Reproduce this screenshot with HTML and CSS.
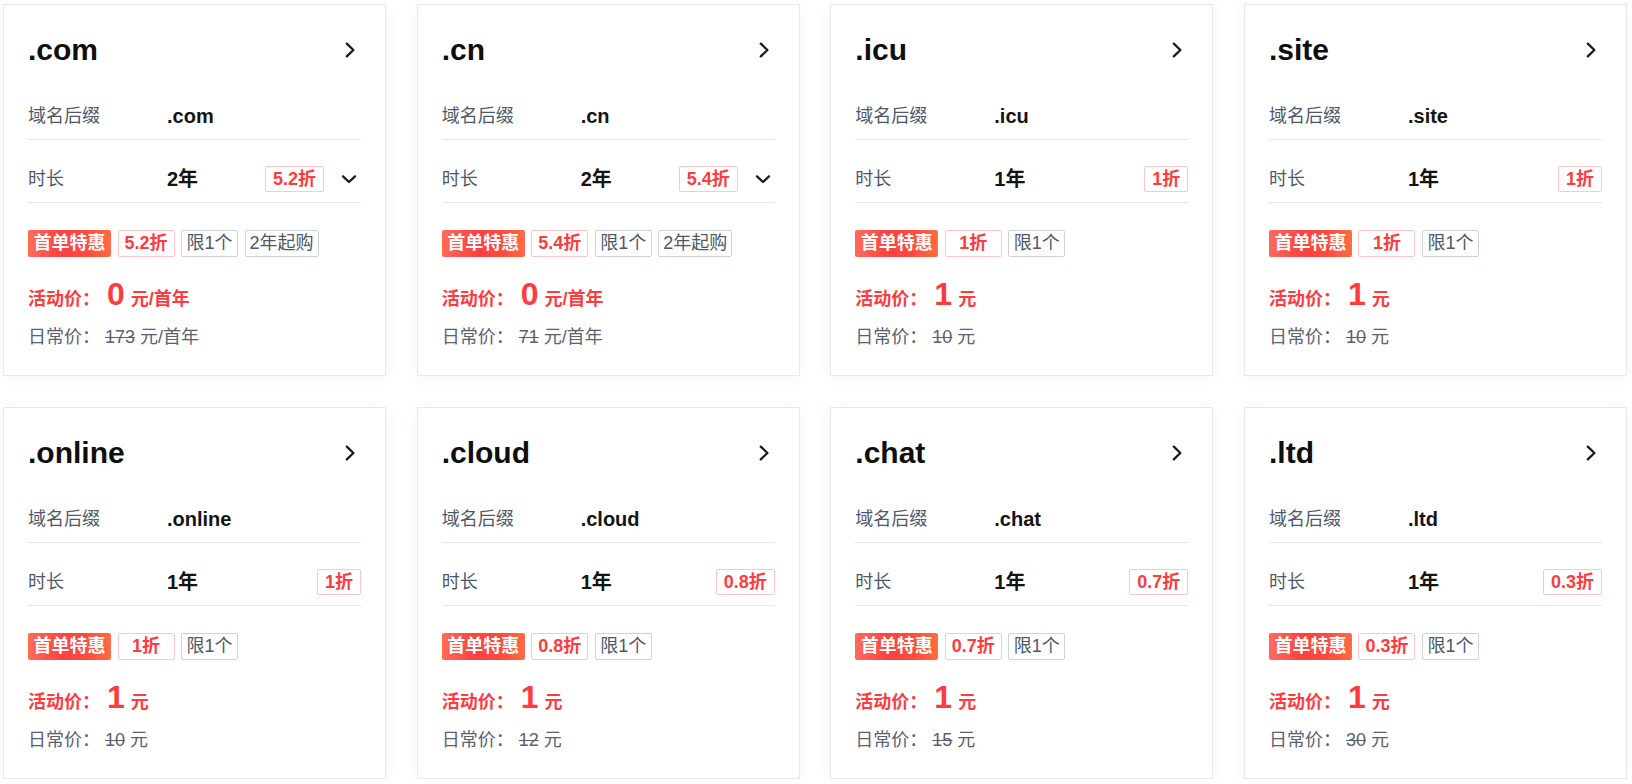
FILE: index.html
```html
<!DOCTYPE html>
<html lang="zh-CN">
<head>
<meta charset="utf-8">
<title>域名优惠</title>
<link rel="stylesheet" href="styles.css">
</head>
<body>
<div class="grid">

  <div class="card">
    <div class="card-head"><span class="title">.com</span>
      <svg class="chev-r" viewBox="0 0 20 20"><path d="M5.8 3.6 L12.4 10 L5.8 16.4"/></svg></div>
    <div class="row"><span class="label">域名后缀</span><span class="value suffix">.com</span></div>
    <div class="row"><span class="label">时长</span><span class="value">2年</span><span class="badge">5.2折</span>
      <svg class="chev-d" viewBox="0 0 20 20"><path d="M4 7.4 L10 13 L16 7.4"/></svg></div>
    <div class="tags"><span class="tag hot">首单特惠</span><span class="tag red">5.2折</span><span class="tag gray">限1个</span><span class="tag gray">2年起购</span></div>
    <div class="price">活动价： <span class="big">0</span> 元/首年</div>
    <div class="regular">日常价： <s>173</s> 元/首年</div>
  </div>

  <div class="card">
    <div class="card-head"><span class="title">.cn</span>
      <svg class="chev-r" viewBox="0 0 20 20"><path d="M5.8 3.6 L12.4 10 L5.8 16.4"/></svg></div>
    <div class="row"><span class="label">域名后缀</span><span class="value suffix">.cn</span></div>
    <div class="row"><span class="label">时长</span><span class="value">2年</span><span class="badge">5.4折</span>
      <svg class="chev-d" viewBox="0 0 20 20"><path d="M4 7.4 L10 13 L16 7.4"/></svg></div>
    <div class="tags"><span class="tag hot">首单特惠</span><span class="tag red">5.4折</span><span class="tag gray">限1个</span><span class="tag gray">2年起购</span></div>
    <div class="price">活动价： <span class="big">0</span> 元/首年</div>
    <div class="regular">日常价： <s>71</s> 元/首年</div>
  </div>

  <div class="card">
    <div class="card-head"><span class="title">.icu</span>
      <svg class="chev-r" viewBox="0 0 20 20"><path d="M5.8 3.6 L12.4 10 L5.8 16.4"/></svg></div>
    <div class="row"><span class="label">域名后缀</span><span class="value suffix">.icu</span></div>
    <div class="row"><span class="label">时长</span><span class="value">1年</span><span class="badge">1折</span></div>
    <div class="tags"><span class="tag hot">首单特惠</span><span class="tag red">1折</span><span class="tag gray">限1个</span></div>
    <div class="price">活动价： <span class="big">1</span> 元</div>
    <div class="regular">日常价： <s>10</s> 元</div>
  </div>

  <div class="card">
    <div class="card-head"><span class="title">.site</span>
      <svg class="chev-r" viewBox="0 0 20 20"><path d="M5.8 3.6 L12.4 10 L5.8 16.4"/></svg></div>
    <div class="row"><span class="label">域名后缀</span><span class="value suffix">.site</span></div>
    <div class="row"><span class="label">时长</span><span class="value">1年</span><span class="badge">1折</span></div>
    <div class="tags"><span class="tag hot">首单特惠</span><span class="tag red">1折</span><span class="tag gray">限1个</span></div>
    <div class="price">活动价： <span class="big">1</span> 元</div>
    <div class="regular">日常价： <s>10</s> 元</div>
  </div>

  <div class="card">
    <div class="card-head"><span class="title">.online</span>
      <svg class="chev-r" viewBox="0 0 20 20"><path d="M5.8 3.6 L12.4 10 L5.8 16.4"/></svg></div>
    <div class="row"><span class="label">域名后缀</span><span class="value suffix">.online</span></div>
    <div class="row"><span class="label">时长</span><span class="value">1年</span><span class="badge">1折</span></div>
    <div class="tags"><span class="tag hot">首单特惠</span><span class="tag red">1折</span><span class="tag gray">限1个</span></div>
    <div class="price">活动价： <span class="big">1</span> 元</div>
    <div class="regular">日常价： <s>10</s> 元</div>
  </div>

  <div class="card">
    <div class="card-head"><span class="title">.cloud</span>
      <svg class="chev-r" viewBox="0 0 20 20"><path d="M5.8 3.6 L12.4 10 L5.8 16.4"/></svg></div>
    <div class="row"><span class="label">域名后缀</span><span class="value suffix">.cloud</span></div>
    <div class="row"><span class="label">时长</span><span class="value">1年</span><span class="badge">0.8折</span></div>
    <div class="tags"><span class="tag hot">首单特惠</span><span class="tag red">0.8折</span><span class="tag gray">限1个</span></div>
    <div class="price">活动价： <span class="big">1</span> 元</div>
    <div class="regular">日常价： <s>12</s> 元</div>
  </div>

  <div class="card">
    <div class="card-head"><span class="title">.chat</span>
      <svg class="chev-r" viewBox="0 0 20 20"><path d="M5.8 3.6 L12.4 10 L5.8 16.4"/></svg></div>
    <div class="row"><span class="label">域名后缀</span><span class="value suffix">.chat</span></div>
    <div class="row"><span class="label">时长</span><span class="value">1年</span><span class="badge">0.7折</span></div>
    <div class="tags"><span class="tag hot">首单特惠</span><span class="tag red">0.7折</span><span class="tag gray">限1个</span></div>
    <div class="price">活动价： <span class="big">1</span> 元</div>
    <div class="regular">日常价： <s>15</s> 元</div>
  </div>

  <div class="card">
    <div class="card-head"><span class="title">.ltd</span>
      <svg class="chev-r" viewBox="0 0 20 20"><path d="M5.8 3.6 L12.4 10 L5.8 16.4"/></svg></div>
    <div class="row"><span class="label">域名后缀</span><span class="value suffix">.ltd</span></div>
    <div class="row"><span class="label">时长</span><span class="value">1年</span><span class="badge">0.3折</span></div>
    <div class="tags"><span class="tag hot">首单特惠</span><span class="tag red">0.3折</span><span class="tag gray">限1个</span></div>
    <div class="price">活动价： <span class="big">1</span> 元</div>
    <div class="regular">日常价： <s>30</s> 元</div>
  </div>

</div>
</body>
</html>
```
FILE: styles.css
```css
* { box-sizing: border-box; }

html, body {
  margin: 0;
  background: #ffffff;
}

body {
  font-family: "Liberation Sans", "Noto Sans CJK SC", sans-serif;
  color: #151515;
}

.grid {
  display: grid;
  width: 1627px;
  padding: 4px 0 0 3px;
  grid-template-columns: repeat(4, 383px);
  column-gap: 30.67px;
  row-gap: 31px;
}

.card {
  height: 372px;
  border: 1px solid #e6e9ef;
  background: #fff;
  box-shadow: 0 2px 14px rgba(40, 70, 140, 0.05);
  padding: 23px 24px 0 24px;
}

.card-head {
  display: flex;
  align-items: center;
  justify-content: space-between;
  height: 44px;
  margin-bottom: 5px;
}

.title {
  font-size: 30px;
  line-height: 44px;
  font-weight: 700;
  color: #0f0f0f;
}

.chev-r {
  width: 20px;
  height: 20px;
  fill: none;
  stroke: #1a1a1a;
  stroke-width: 2.3;
  stroke-linecap: round;
  stroke-linejoin: round;
}

.row {
  display: flex;
  align-items: center;
  padding: 28px 0 12px;
  border-bottom: 1px solid #e5e8ee;
  line-height: 22px;
}

.label {
  width: 139px;
  flex: none;
  font-size: 18px;
  color: #4e5868;
}

.value {
  flex: 1;
  font-size: 20px;
  font-weight: 700;
  color: #141414;
}

.badge {
  height: 26px;
  line-height: 24px;
  padding: 0 7px;
  border: 1px solid #ffc6ca;
  border-radius: 2px;
  color: #ff3b3f;
  font-size: 18px;
  font-weight: 700;
  margin-top: -2px;
  margin-bottom: -2px;
}

.chev-d {
  width: 20px;
  height: 20px;
  margin-left: 15px;
  margin-right: 2px;
  fill: none;
  stroke: #1a1a1a;
  stroke-width: 2.3;
  stroke-linecap: round;
  stroke-linejoin: round;
}

.tags {
  display: flex;
  gap: 6.5px;
  margin-top: 27px;
}

.tag {
  height: 27px;
  min-width: 57px;
  line-height: 25px;
  padding: 0 4px;
  border: 1px solid transparent;
  border-radius: 2px;
  font-size: 18px;
  text-align: center;
  white-space: nowrap;
}

.tag.hot {
  color: #fff;
  font-weight: 700;
  padding: 0 4.5px;
  background: linear-gradient(90deg, #ff6a5c 0%, #ff4140 40%, #ff4a3e 70%, #ff6b3f 100%);
}

.tag.red {
  border-color: #ffc6ca;
  color: #ff3b3f;
  font-weight: 700;
}

.tag.gray {
  border-color: #cdd3dd;
  color: #4e5868;
}

.price {
  margin-top: 21px;
  font-size: 18px;
  line-height: 32px;
  font-weight: 700;
  color: #ff3b3f;
}

.price .big {
  font-size: 32px;
  line-height: 32px;
  margin: 0 1px 0 2px;
}

.regular {
  margin-top: 11px;
  font-size: 18px;
  line-height: 22px;
  color: #5a6271;
}

.regular s {
  text-decoration-thickness: 1px;
}
```
